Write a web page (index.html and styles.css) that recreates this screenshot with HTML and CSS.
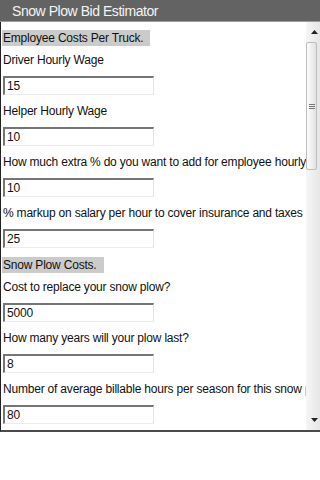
FILE: index.html
```html
<!DOCTYPE html>
<html>
<head>
<meta charset="utf-8">
<link rel="stylesheet" href="styles.css">
</head>
<body>
<div class="titlebar">Snow Plow Bid Estimator</div>
<div class="panel">
  <div class="content">
    <div class="section">Employee Costs Per Truck.</div>
    <div class="label first">Driver Hourly Wage</div>
    <input class="field" type="text" value="15">
    <div class="label">Helper Hourly Wage</div>
    <input class="field" type="text" value="10">
    <div class="label">How much extra % do you want to add for employee hourly wage?</div>
    <input class="field" type="text" value="10">
    <div class="label">% markup on salary per hour to cover insurance and taxes</div>
    <input class="field" type="text" value="25">
    <div class="section gap">Snow Plow Costs.</div>
    <div class="label first">Cost to replace your snow plow?</div>
    <input class="field" type="text" value="5000">
    <div class="label">How many years will your plow last?</div>
    <input class="field" type="text" value="8">
    <div class="label">Number of average billable hours per season for this snow plow?</div>
    <input class="field" type="text" value="80">
  </div>
  <div class="scrollbar">
    <div class="sb-btn up">
      <svg width="7" height="4" viewBox="0 0 7 4"><polygon points="0,4 3.5,0 7,4" fill="#222"/></svg>
    </div>
    <div class="sb-track">
      <div class="sb-thumb">
        <div class="grip"><span></span><span></span><span></span></div>
      </div>
    </div>
    <div class="sb-btn down">
      <svg width="7" height="4" viewBox="0 0 7 4"><polygon points="0,0 7,0 3.5,4" fill="#222"/></svg>
    </div>
  </div>
</div>
</body>
</html>
```

FILE: styles.css
```css
html, body {
  margin: 0;
  padding: 0;
  background: #fff;
}
body {
  width: 320px;
  height: 480px;
  font-family: "Liberation Sans", Arial, sans-serif;
  color: #111;
  overflow: hidden;
}
.titlebar {
  height: 19px;
  padding: 2px 0 0 12px;
  line-height: 19px;
  background: #636363;
  color: #f4f4f4;
  font-size: 14px;
  letter-spacing: -0.45px;
  border-bottom: 1px solid #9c9c9c;
}
.panel {
  display: flex;
  height: 408px;
  border-left: 1px solid #222;
  border-bottom: 2px solid #4a4a4a;
}
.content {
  flex: 1;
  min-width: 0;
  overflow: hidden;
  padding: 8px 0 0 1px;
  display: flex;
  flex-direction: column;
  align-items: flex-start;
  font-size: 12px;
  letter-spacing: -0.2px;
}
.section {
  height: 16px;
  line-height: 16px;
  padding: 0 7px 0 1px;
  background: #cbcbcb;
  white-space: nowrap;
}
.section.gap {
  margin-top: 9px;
}
.label {
  margin-top: 8px;
  padding-left: 1px;
  line-height: 16px;
  white-space: nowrap;
}
.label.first {
  margin-top: 6px;
}
.field {
  display: block;
  margin: 8px 0 0 1px;
  width: 151px;
  height: 19px;
  box-sizing: border-box;
  padding: 0 0 0 2px;
  border-top: 2px solid #757575;
  border-left: 2px solid #757575;
  border-right: 1px solid #e4e4e4;
  border-bottom: 1px solid #ececec;
  background: #fff;
  font-family: "Liberation Sans", Arial, sans-serif;
  font-size: 12px;
  letter-spacing: -0.2px;
  color: #111;
  outline: none;
}
.scrollbar {
  width: 14px;
  display: flex;
  flex-direction: column;
  background: linear-gradient(to right, #f6f6f6, #e6e6e6);
}
.sb-btn {
  display: flex;
  justify-content: center;
}
.sb-btn.up {
  height: 19px;
  align-items: center;
  padding-left: 2px;
}
.sb-btn.down {
  height: 12px;
  align-items: flex-start;
  padding-left: 2px;
}
.sb-track {
  flex: 1;
}
.sb-thumb {
  margin: 1px 3px 0 0;
  height: 128px;
  box-sizing: border-box;
  border: 1px solid #bdbdbd;
  border-radius: 2px;
  background: linear-gradient(to right, #fdfdfd, #e2e2e2);
  display: flex;
  flex-direction: column;
  align-items: center;
  padding-top: 61px;
}
.grip {
  display: flex;
  flex-direction: column;
  gap: 1px;
}
.grip span {
  display: block;
  width: 6px;
  height: 1px;
  background: #777;
}
```
